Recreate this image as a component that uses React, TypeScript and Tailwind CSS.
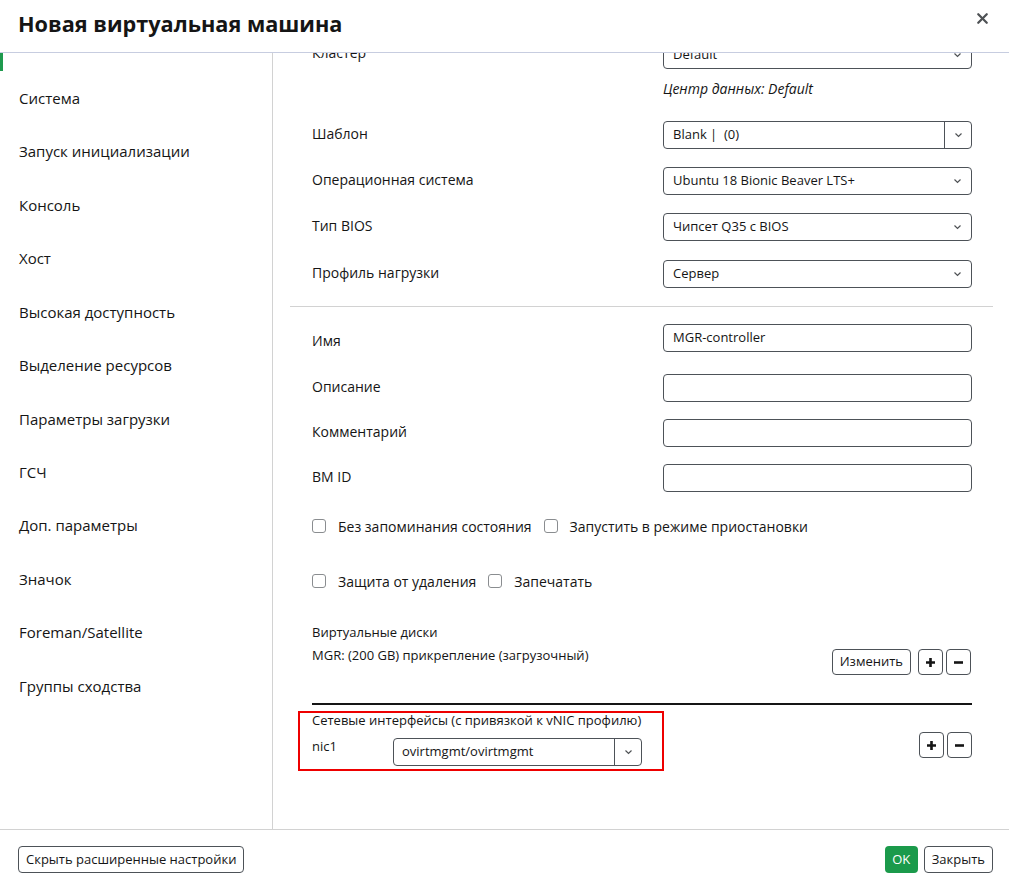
import { X } from "lucide-react";

const font = { fontFamily: '"Open Sans", "Liberation Sans", sans-serif' };

const navItems = [
  "Система",
  "Запуск инициализации",
  "Консоль",
  "Хост",
  "Высокая доступность",
  "Выделение ресурсов",
  "Параметры загрузки",
  "ГСЧ",
  "Доп. параметры",
  "Значок",
  "Foreman/Satellite",
  "Группы сходства",
];

const Chevron = () => (
  <svg width="9" height="6" viewBox="0 0 9 6" className="text-[#4f5255]">
    <polyline points="1.5,1.5 4.5,4.5 7.5,1.5" fill="none" stroke="currentColor" strokeWidth="1.2" />
  </svg>
);

const Select = ({ value, split }: { value: string; split?: boolean }) => (
  <div className="w-[309px] h-[28px] border border-[#4d5258] rounded-[4px] flex items-center text-[13px] text-[#151515] bg-white">
    <span className="flex-1 pl-[9px] truncate whitespace-pre">{value}</span>
    {split ? (
      <span className="w-[27px] h-full border-l border-[#4d5258] flex items-center justify-center">
        <Chevron />
      </span>
    ) : (
      <span className="w-[27px] flex items-center justify-center">
        <Chevron />
      </span>
    )}
  </div>
);

const TextInput = ({ value }: { value?: string }) => (
  <div className="w-[309px] h-[28px] border border-[#4d5258] rounded-[4px] flex items-center text-[13px] text-[#151515] pl-[9px]">
    {value}
  </div>
);

const Row = ({
  label,
  children,
  className,
  labelClass,
}: {
  label: string;
  children: React.ReactNode;
  className?: string;
  labelClass?: string;
}) => (
  <div className={"flex items-center " + (className ?? "")}>
    <div className={"w-[351px] text-[14px] text-[#151515] " + (labelClass ?? "")}>{label}</div>
    {children}
  </div>
);

const Check = ({ label }: { label: string }) => (
  <label className="flex items-center gap-[12px] text-[14px] text-[#151515]">
    <span className="w-[14px] h-[14px] border border-[#8a8d90] rounded-[3px] bg-white" />
    {label}
  </label>
);

const IconBtn = ({ sign }: { sign: "+" | "-" }) => (
  <button className="w-[25px] h-[26px] border border-[#4d5258] rounded-[4px] flex items-center justify-center">
    {sign === "+" ? (
      <svg width="11" height="11" viewBox="0 0 11 11">
        <path d="M5.5 1v9M1 5.5h9" stroke="#151515" strokeWidth="2.6" />
      </svg>
    ) : (
      <svg width="11" height="11" viewBox="0 0 11 11">
        <path d="M1 5.5h9" stroke="#151515" strokeWidth="2.6" />
      </svg>
    )}
  </button>
);

export default function App() {
  return (
    <div style={font} className="w-[1009px] h-[889px] bg-white flex flex-col overflow-hidden text-[#151515]">
      <div className="h-[53px] border-b border-[#c7cde0] flex items-start justify-between pl-[18px] pr-[18px]">
        <h1 className="text-[21.7px] font-bold leading-[30px] mt-[9px] text-[#151515]">Новая виртуальная машина</h1>
        <X size={17} strokeWidth={3.2} className="mt-[10px] text-[#4f5255]" />
      </div>

      <div className="flex h-[776px]">
        <div className="w-[273px] border-r border-[#d2d2d2] overflow-hidden">
          <div className="mt-[-35px] flex flex-col">
            {/* active tab (Общие) scrolled out of view, only its marker shows */}
            <div className="h-[53.45px] border-l-[3px] border-[#1e9a4e]" />
            {navItems.map((item) => (
              <div key={item} className="h-[53.45px] flex items-center pl-[19px] text-[15px] text-[#151515]">
                {item}
              </div>
            ))}
          </div>
        </div>

        <div className="flex-1 overflow-hidden">
          <div className="mt-[-12px] flex flex-col">
            <div className="pl-[39px] flex flex-col">
              <Row label="Кластер" labelClass="-mt-[6px]">
                <Select value="Default" />
              </Row>
              <div className="ml-[351px] mt-[9px] h-[20px] text-[14px] italic text-[#151515]">Центр данных: Default</div>
              <Row label="Шаблон" className="mt-[23px]" labelClass="-mt-[4px]">
                <Select value="Blank |  (0)" split />
              </Row>
              <Row label="Операционная система" className="mt-[18px]" labelClass="-mt-[4px]">
                <Select value="Ubuntu 18 Bionic Beaver LTS+" />
              </Row>
              <Row label="Тип BIOS" className="mt-[18px]" labelClass="-mt-[4px]">
                <Select value="Чипсет Q35 с BIOS" />
              </Row>
              <Row label="Профиль нагрузки" className="mt-[19px]" labelClass="-mt-[4px]">
                <Select value="Сервер" />
              </Row>
            </div>
            <div className="ml-[17px] mr-[16px] mt-[18px] border-t border-[#d2d2d2]" />
            <div className="pl-[39px] flex flex-col">
              <Row label="Имя" className="mt-[17px]" labelClass="mt-[5px]">
                <TextInput value="MGR-controller" />
              </Row>
              <Row label="Описание" className="mt-[22px]" labelClass="-mt-[4px]">
                <TextInput />
              </Row>
              <Row label="Комментарий" className="mt-[17px]" labelClass="-mt-[4px]">
                <TextInput />
              </Row>
              <Row label="ВМ ID" className="mt-[17px]" labelClass="-mt-[3px]">
                <TextInput />
              </Row>
              <div className="mt-[24px] h-[20px] flex items-center gap-[12px]">
                <Check label="Без запоминания состояния" />
                <Check label="Запустить в режиме приостановки" />
              </div>
              <div className="mt-[35px] h-[20px] flex items-center gap-[12px]">
                <Check label="Защита от удаления" />
                <Check label="Запечатать" />
              </div>
              <div className="mt-[31px] text-[13px] leading-[20px]">Виртуальные диски</div>
              <div className="flex items-start justify-between w-[659px] mt-[3px]">
                <div className="text-[13px] leading-[20px]">MGR: (200 GB) прикрепление (загрузочный)</div>
                <div className="flex items-center gap-[3px] mt-[4px]">
                  <button className="h-[26px] px-[7px] border border-[#4d5258] rounded-[4px] text-[13px] mr-[4px]">
                    Изменить
                  </button>
                  <IconBtn sign="+" />
                  <IconBtn sign="-" />
                </div>
              </div>
              <div className="w-[660px] mt-[28px] border-t-2 border-[#151515]" />
            </div>
            <div className="flex items-start pl-[25px] mt-[6px]">
              <div className="w-[366px] h-[60px] border-2 border-[#ee0000] pl-[12px]">
                <div className="text-[13px] leading-[16px] -mt-[1px]">Сетевые интерфейсы (с привязкой к vNIC профилю)</div>
                <div className="flex items-start mt-[10px]">
                  <div className="w-[81px] text-[13px] leading-[18px] -mt-[1px]">nic1</div>
                  <div className="w-[249px] h-[28px] border border-[#4d5258] rounded-[4px] flex items-center text-[13px]">
                    <span className="flex-1 pl-[8px]">ovirtmgmt/ovirtmgmt</span>
                    <span className="w-[27px] h-full border-l border-[#4d5258] flex items-center justify-center">
                      <Chevron />
                    </span>
                  </div>
                </div>
              </div>
              <div className="ml-[255px] mt-[21px] flex gap-[3px]">
                <IconBtn sign="+" />
                <IconBtn sign="-" />
              </div>
            </div>
          </div>
        </div>
      </div>

      <div className="h-[60px] border-t border-[#d2d2d2] flex items-center justify-between pl-[18px] pr-[16px]">
        <button className="h-[27px] px-[7px] border border-[#4d5258] rounded-[4px] text-[13px] text-[#151515] bg-white">
          Скрыть расширенные настройки
        </button>
        <div className="flex gap-[6px]">
          <button className="h-[27px] w-[33px] rounded-[4px] bg-[#1b9a4b] text-white text-[13px]">OK</button>
          <button className="h-[27px] px-[7px] border border-[#4d5258] rounded-[4px] text-[13px] text-[#151515] bg-white">
            Закрыть
          </button>
        </div>
      </div>
    </div>
  );
}
